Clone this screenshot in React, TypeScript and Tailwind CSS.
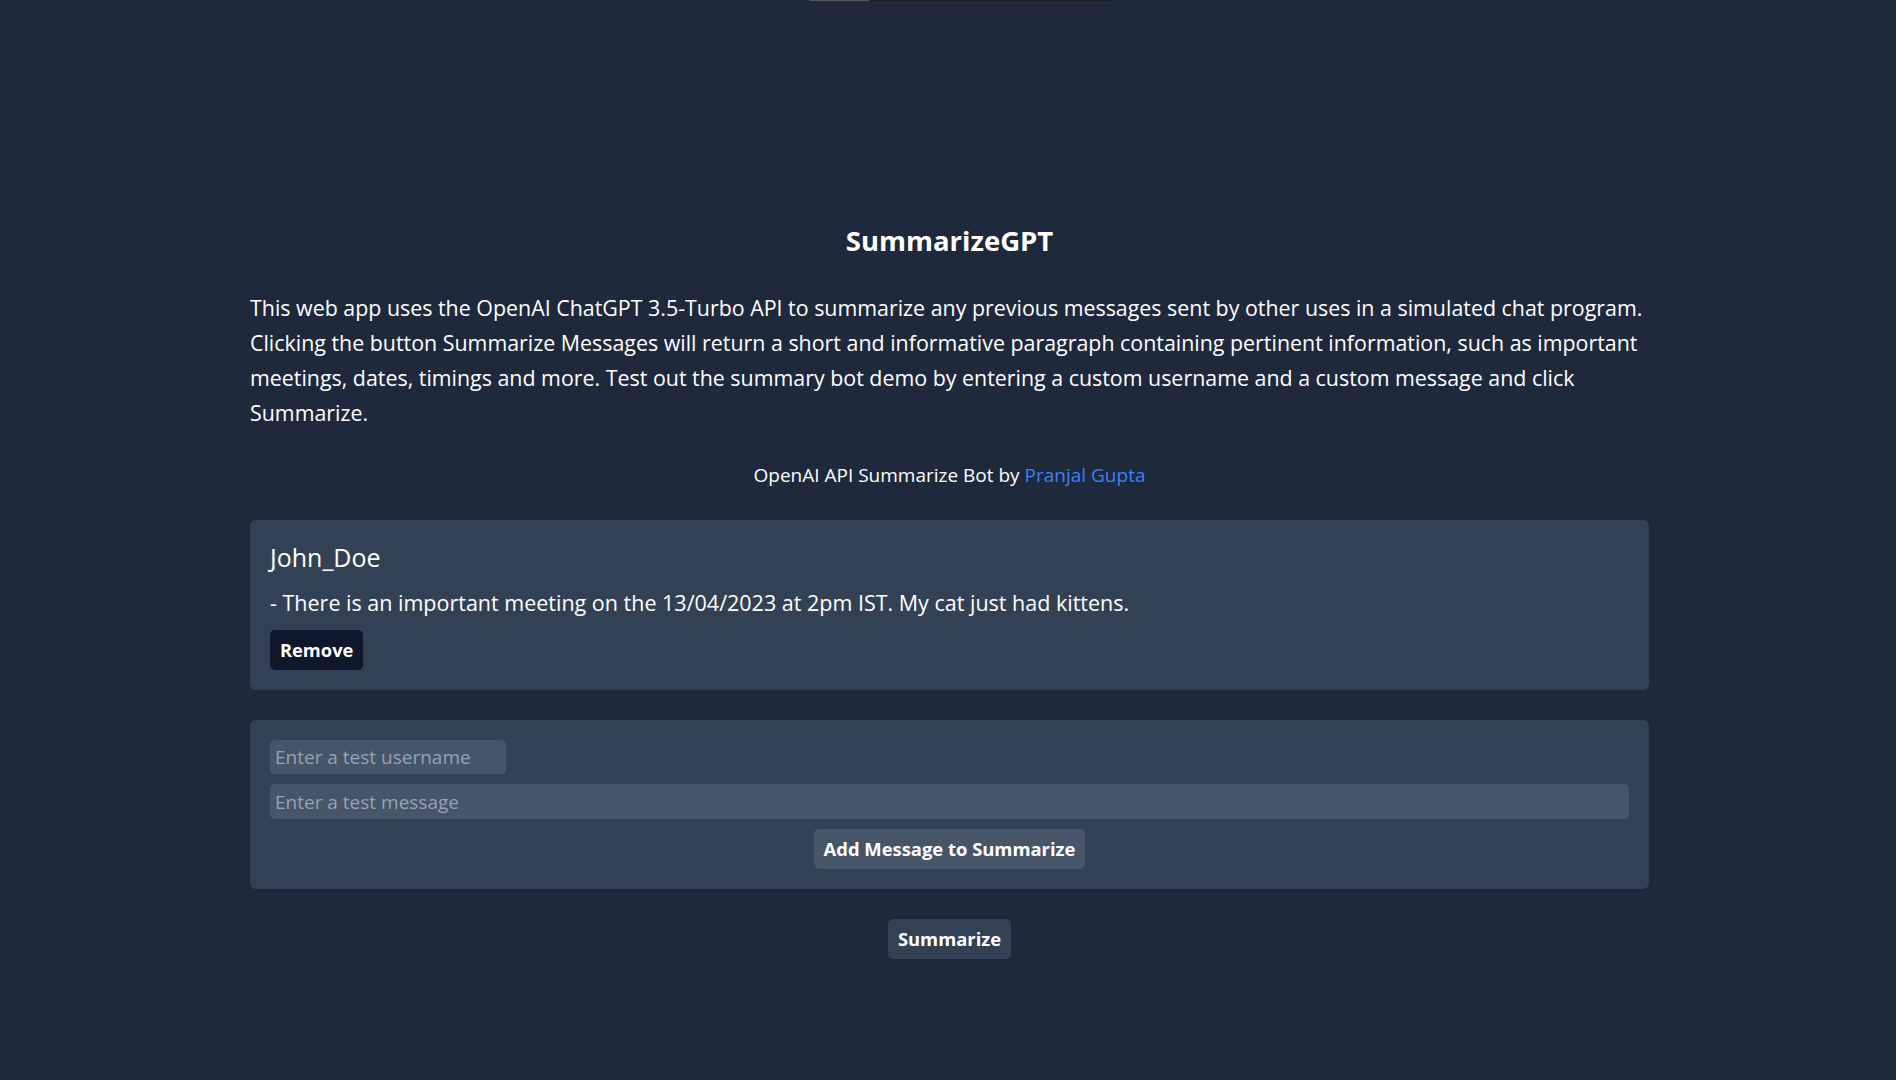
import React from "react";

export default function App() {
  return (
    <div
      className="relative min-h-screen bg-[#1e293b] text-white"
      style={{ fontFamily: '"Segoe UI", "Open Sans", sans-serif' }}
    >
      <div className="absolute left-[809px] top-0 flex h-px w-[304px] bg-[#1f1f22]">
        <div className="h-px w-[60px] bg-[#5a5a5a]" />
      </div>
      <div className="ml-[250px] flex w-[1399px] flex-col pt-[221px] pb-[120px]">
        <h1 className="text-center text-[27.5px] font-bold leading-[40px]">SummarizeGPT</h1>
        <p className="mt-[29px] text-[21.4px] leading-[35px]">
          This web app uses the OpenAI ChatGPT 3.5-Turbo API to summarize any previous messages sent by other uses in a
          simulated chat program. Clicking the button Summarize Messages will return a short and informative paragraph
          containing pertinent information, such as important meetings, dates, timings and more. Test out the summary bot
          demo by entering a custom username and a custom message and click Summarize.
        </p>
        <p className="mt-[30px] text-center text-[19px] leading-[30px]">
          OpenAI API Summarize Bot by <a className="text-[#3b82f6]">Pranjal Gupta</a>
        </p>
        <div className="mt-[30px] flex flex-col items-start rounded-[6px] bg-[#334155] p-[20px]">
          <div className="text-[25px] font-medium leading-[35px]">John_Doe</div>
          <div className="mt-[10px] text-[21.5px] leading-[35px]">
            - There is an important meeting on the 13/04/2023 at 2pm IST. My cat just had kittens.
          </div>
          <button className="mt-[10px] rounded-[5px] bg-[#0f172a] px-[10px] py-[5px] text-[18.3px] font-bold leading-[30px]">
            Remove
          </button>
        </div>
        <div className="mt-[30px] flex flex-col gap-[10px] rounded-[6px] bg-[#334155] p-[20px]">
          <input
            className="h-[34px] w-[236px] rounded-[5px] bg-[#475569] px-[5px] text-[19px] text-white outline-none placeholder:text-[#94a3b8]"
            placeholder="Enter a test username"
          />
          <input
            className="h-[35px] w-full rounded-[5px] bg-[#475569] px-[5px] text-[19px] text-white outline-none placeholder:text-[#94a3b8]"
            placeholder="Enter a test message"
          />
          <button className="self-center rounded-[5px] bg-[#475569] px-[10px] py-[5px] text-[18.4px] font-bold leading-[30px]">
            Add Message to Summarize
          </button>
        </div>
        <button className="mt-[30px] self-center rounded-[5px] bg-[#334155] px-[10px] py-[5px] text-[18.4px] font-bold leading-[30px]">
          Summarize
        </button>
      </div>
    </div>
  );
}
